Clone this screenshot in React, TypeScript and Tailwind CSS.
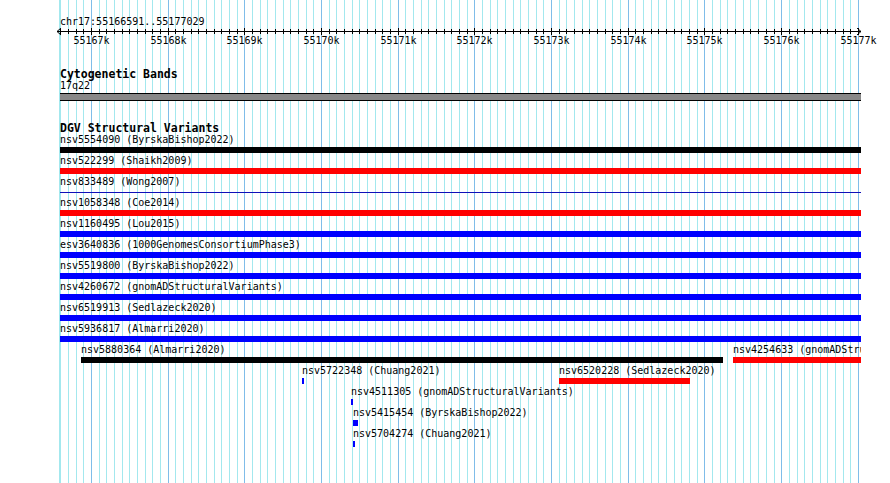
import React from "react";

// view: chr17:55166591..55177029 drawn from x=60 to x=861
const VIEW_START = 55166591;
const PX_PER_BP = 0.0767;
const ORIGIN = 60;

const bpToX = (bp: number) => ORIGIN + (bp - VIEW_START) * PX_PER_BP;

const gridLines: { x: number; major: boolean }[] = [];
for (let bp = 55166600; bp <= 55177000; bp += 100) {
  gridLines.push({ x: Math.round(bpToX(bp) - 0.5), major: bp % 1000 === 0 });
}

type Feature = {
  name: string;
  start: number; // page x
  end: number;
  color: string;
  thin?: boolean;
};

const FULL = { start: 60, end: 861 };

const lanes: Feature[][] = [
  [{ name: "nsv5554090 (ByrskaBishop2022)", ...FULL, color: "bg-black" }],
  [{ name: "nsv522299 (Shaikh2009)", ...FULL, color: "bg-[#ff0000]" }],
  [{ name: "nsv833489 (Wong2007)", ...FULL, color: "bg-[#1010b8]", thin: true }],
  [{ name: "nsv1058348 (Coe2014)", ...FULL, color: "bg-[#ff0000]" }],
  [{ name: "nsv1160495 (Lou2015)", ...FULL, color: "bg-[#0000ff]" }],
  [{ name: "esv3640836 (1000GenomesConsortiumPhase3)", ...FULL, color: "bg-[#0000ff]" }],
  [{ name: "nsv5519800 (ByrskaBishop2022)", ...FULL, color: "bg-[#0000ff]" }],
  [{ name: "nsv4260672 (gnomADStructuralVariants)", ...FULL, color: "bg-[#0000ff]" }],
  [{ name: "nsv6519913 (Sedlazeck2020)", ...FULL, color: "bg-[#0000ff]" }],
  [{ name: "nsv5936817 (Almarri2020)", ...FULL, color: "bg-[#0000ff]" }],
  [
    { name: "nsv5880364 (Almarri2020)", start: 81, end: 723, color: "bg-black" },
    { name: "nsv4254633 (gnomADStructuralVariants)", start: 733, end: 861, color: "bg-[#ff0000]" },
  ],
  [
    { name: "nsv5722348 (Chuang2021)", start: 302, end: 304, color: "bg-[#0000ff]" },
    { name: "nsv6520228 (Sedlazeck2020)", start: 559, end: 690, color: "bg-[#ff0000]" },
  ],
  [{ name: "nsv4511305 (gnomADStructuralVariants)", start: 351, end: 353, color: "bg-[#0000ff]" }],
  [{ name: "nsv5415454 (ByrskaBishop2022)", start: 353, end: 358, color: "bg-[#0000ff]" }],
  [{ name: "nsv5704274 (Chuang2021)", start: 353, end: 355, color: "bg-[#0000ff]" }],
];

function GridLines() {
  return (
    <svg className="absolute left-0 top-0 pointer-events-none" width={890} height={483}>
      <rect x={59} y={0} width={1} height={483} fill="#a3e8ee" />
      {gridLines.map((l) => (
        <rect key={l.x} x={l.x} y={0} width={1} height={483} fill={l.major ? "#80bde9" : "#a3e8ee"} />
      ))}
    </svg>
  );
}

function Ruler() {
  return (
    <div className="flex flex-col pt-[16px]">
      <div className="h-[12px] leading-[12px]">chr17:55166591..55177029</div>
      <svg width={810} height={9} className="block -ml-[3px]">
        <g transform="translate(-57,-28)" stroke="#000" strokeWidth={1}>
          <line x1={57} y1={31.5} x2={861} y2={31.5} shapeRendering="crispEdges" />
          <polyline points="61,28 57,31.5 61,35" fill="none" />
          <polyline points="857,28 861,31.5 857,35" fill="none" />
          {gridLines.map((l) => (
            <line
              key={l.x}
              x1={l.x + 0.5}
              y1={l.major ? 28 : 29}
              x2={l.x + 0.5}
              y2={l.major ? 35 : 34}
              shapeRendering="crispEdges"
            />
          ))}
        </g>
      </svg>
      <div className="relative h-[12px] -mt-[2px] leading-[12px]">
        {gridLines
          .filter((l) => l.major)
          .map((l, i) => (
            <span
              key={l.x}
              className="absolute top-0 -translate-x-1/2 whitespace-nowrap"
              style={{ left: l.x - ORIGIN + 0.5 }}
            >
              {55167 + i}k
            </span>
          ))}
      </div>
    </div>
  );
}

function TrackLabel({ children }: { children: React.ReactNode }) {
  return <div className="h-[13px] leading-[15px] text-[11.5px] font-bold">{children}</div>;
}

function FeatureGlyph({ f }: { f: Feature }) {
  return (
    <div className="absolute top-0 flex flex-col items-start gap-px" style={{ left: f.start - ORIGIN }}>
      <span className="h-[12px] leading-[12px] whitespace-nowrap">{f.name}</span>
      <div className="flex h-[6px] items-center" style={{ width: f.end - f.start }}>
        <div className={`w-full ${f.color} ${f.thin ? "h-px" : "h-full"}`} />
      </div>
    </div>
  );
}

function Lane({ features }: { features: Feature[] }) {
  return (
    <div className="relative h-[21px]">
      {features.map((f) => (
        <FeatureGlyph key={f.name} f={f} />
      ))}
    </div>
  );
}

export default function App() {
  return (
    <div className="relative w-[890px] h-[483px] bg-white overflow-hidden text-black text-[10px] font-['DejaVu_Sans_Mono',monospace]">
      <GridLines />
      <div className="relative flex flex-col ml-[60px] w-[801px]">
        <Ruler />

        <section className="flex flex-col mt-[20px]">
          <TrackLabel>Cytogenetic Bands</TrackLabel>
          <div className="flex flex-col gap-px h-[21px]">
            <span className="h-[12px] leading-[12px]">17q22</span>
            <div className="h-[8px] bg-[#888888] border-y border-black" />
          </div>
        </section>

        <section className="flex flex-col mt-[20px] overflow-hidden">
          <TrackLabel>DGV Structural Variants</TrackLabel>
          {lanes.map((features, i) => (
            <Lane key={i} features={features} />
          ))}
        </section>
      </div>
    </div>
  );
}
